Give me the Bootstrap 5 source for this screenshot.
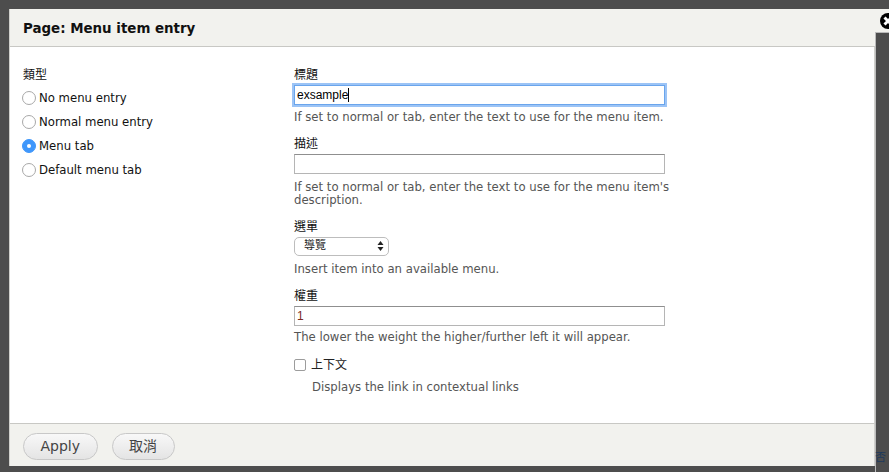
<!DOCTYPE html>
<html lang="zh-TW">
<head>
  <meta charset="UTF-8">
  <meta name="viewport" content="width=device-width, initial-scale=1.0">
  <title>Page: Menu item entry</title>
  <link href="https://cdn.jsdelivr.net/npm/bootstrap@5.3.0/dist/css/bootstrap.min.css" rel="stylesheet">
  <style>
    html, body { height: 100%; }
    body {
      background: #4d4d4d;
      font-family: "DejaVu Sans", "Noto Sans CJK TC", sans-serif;
      font-size: 11.7px;
      line-height: 14px;
      color: #000;
      overflow: hidden;
      padding: 9px 0 0 9px;
      position: relative;
    }
    .dlg { width: 866px; height: 457px; display: flex; flex-direction: column; background: #fff; border-left: 1px solid #d0d0cc; }
    .dlg-head {
      height: 37px; width: 880px; background: #f2f2ee; flex: none;
      padding: 11px 0 0 13px;
      font-size: 13.4px; line-height: 18px; font-weight: 700; color: #111;
    }
    .dlg-headline { height: 1px; background: #c8c8c4; flex: none; }
    .dlg-body { flex: 1; display: flex; padding: 20px 0 0 13px; border-right: 1px solid #d0d0cc; }
    .type-col { width: 271px; flex: none; }
    .form-col { width: 380px; flex: none; }
    .fld-label { display: block; font-size: 12px; line-height: 16px; color: #111; margin-bottom: 2px; }
    .type-label { margin-bottom: 3px; }
    .radio-row { display: flex; align-items: center; height: 24px; gap: 3px; margin-left: -1px; color: #111; }
    .radio-dot { width: 14px; height: 14px; border-radius: 50%; border: 1px solid #a8a8a8; background: #fff; flex: none; }
    .radio-dot.on { background: #3f97fb; border-color: #3f97fb; display: flex; align-items: center; justify-content: center; }
    .radio-dot.on::after { content: ""; width: 4px; height: 4px; border-radius: 50%; background: #fff; }
    .txt-in {
      display: block; width: 371px; height: 20px; border: 1px solid #b5b5b5; border-top-color: #8f8f8f;
      padding: 0 2px; font: 12px/18px "Liberation Sans", sans-serif; color: #111; background: #fff;
    }
    .txt-in.focused { border-color: #6aa5ec; box-shadow: 0 0 0 2px #9cc4f6; color: #000; }
    .caret-bar { display: inline-block; width: 1px; height: 14px; background: #000; vertical-align: -3px; }
    .weight-val { color: #7a2a1e; }
    .hint { color: #555; margin-top: 6px; line-height: 13.5px; }
    .hint-low { margin-top: 7px; }
    .hint-high { margin-top: 5px; }
    .fld-block { margin-bottom: 12px; }
    .fld-up { margin-top: -1px; margin-bottom: 11px; }
    .fld-last { margin-bottom: 13px; }
    .sel-box {
      width: 95px; height: 19px; border: 1px solid #bdbdbd; border-radius: 5px; background: #fff;
      display: flex; align-items: center; justify-content: space-between; padding: 0 4px 0 9px; color: #222; font-size: 11px;
    }
    .chk-row { display: flex; align-items: center; gap: 5px; color: #222; font-size: 12px; }
    .chk-box { width: 12px; height: 12px; border: 1px solid #9c9c9c; border-radius: 2px; background: #fff; flex: none; }
    .chk-hint { color: #555; margin: 8px 0 0 18px; }
    .dlg-foot {
      height: 43px; background: #f2f2ee; border-top: 1px solid #c8c8c4; flex: none;
      display: flex; align-items: center; gap: 14px; padding: 2px 0 0 13px; border-right: 1px solid #d0d0cc;
    }
    .pill-btn {
      height: 27px; border: 1px solid #c8c8c8; border-radius: 14px;
      background: linear-gradient(#f8f8f8, #e4e4e4); color: #444;
      font-size: 14px; line-height: 23px; padding: 0 16.5px;
      font-family: inherit;
    }
    .close-x {
      position: absolute; left: 880px; top: 13px; width: 16px; height: 16px; border-radius: 50%;
      background: #000; display: block;
    }
    .side-cover { position: absolute; left: 875px; top: 32px; width: 14px; height: 440px; background: #4d4d4d; border-left: 1px solid #bbb; border-top: 1px solid #bbb; }
    .side-char { position: absolute; left: 875px; top: 451px; font-size: 11px; color: #1d3a5c; }
  </style>
</head>
<body>
  <div class="dlg">
    <div class="dlg-head">Page: Menu item entry</div>
    <div class="dlg-headline"></div>
    <div class="dlg-body">
      <div class="type-col">
        <div class="fld-label type-label">類型</div>
        <div class="radio-row"><span class="radio-dot"></span>No menu entry</div>
        <div class="radio-row"><span class="radio-dot"></span>Normal menu entry</div>
        <div class="radio-row"><span class="radio-dot on"></span>Menu tab</div>
        <div class="radio-row"><span class="radio-dot"></span>Default menu tab</div>
      </div>
      <div class="form-col">
        <div class="fld-block">
          <label class="fld-label">標題</label>
          <div class="txt-in focused">exsample<span class="caret-bar"></span></div>
          <div class="hint">If set to normal or tab, enter the text to use for the menu item.</div>
        </div>
        <div class="fld-block fld-up">
          <label class="fld-label">描述</label>
          <div class="txt-in"></div>
          <div class="hint hint-low">If set to normal or tab, enter the text to use for the menu item's description.</div>
        </div>
        <div class="fld-block">
          <label class="fld-label">選單</label>
          <div class="sel-box"><span>導覽</span>
            <svg width="7" height="12" viewBox="0 0 7 12"><path d="M3.5 1 6.5 5H.5zM3.5 11 .5 7h6z" fill="#222"/></svg>
          </div>
          <div class="hint hint-low">Insert item into an available menu.</div>
        </div>
        <div class="fld-block fld-last">
          <label class="fld-label">權重</label>
          <div class="txt-in"><span class="weight-val">1</span></div>
          <div class="hint hint-high">The lower the weight the higher/further left it will appear.</div>
        </div>
        <div class="chk-row"><span class="chk-box"></span>上下文</div>
        <div class="chk-hint">Displays the link in contextual links</div>
      </div>
    </div>
    <div class="dlg-foot">
      <button type="button" class="pill-btn">Apply</button>
      <button type="button" class="pill-btn">取消</button>
    </div>
  </div>
  <div class="side-cover"></div>
  <span class="close-x">
    <svg class="d-block" width="16" height="16" viewBox="0 0 16 16"><path d="M4.5 4.5 11.5 11.5M11.5 4.5 4.5 11.5" stroke="#fff" stroke-width="3"/></svg>
  </span>
  <span class="side-char">否</span>
  <script src="https://cdn.jsdelivr.net/npm/bootstrap@5.3.0/dist/js/bootstrap.bundle.min.js"></script>
</body>
</html>
